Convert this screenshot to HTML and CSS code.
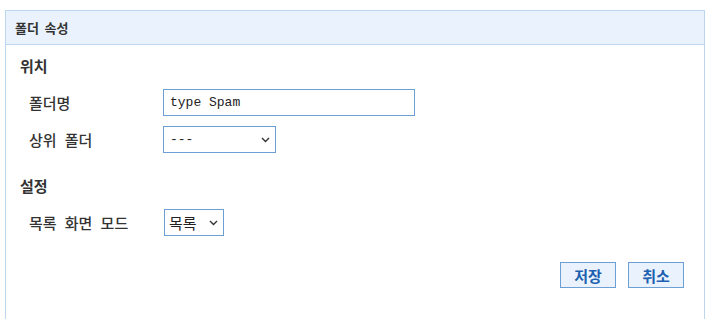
FILE: index.html
```html
<!DOCTYPE html>
<html lang="ko">
<head>
<meta charset="UTF-8">
<meta name="viewport" content="width=device-width, initial-scale=1.0">
<title>폴더 속성</title>
<link rel="stylesheet" href="styles.css">
</head>
<body>
<div class="panel">
  <div class="panel-head">폴더 속성</div>
  <div class="panel-body">
    <h3 class="section">위치</h3>
    <div class="row">
      <label class="label">폴더명</label>
      <input type="text" class="text" value="type Spam">
    </div>
    <div class="row">
      <label class="label">상위 폴더</label>
      <select class="slct slct-parent">
        <option>---</option>
      </select>
    </div>
    <h3 class="section section-gap">설정</h3>
    <div class="row">
      <label class="label">목록 화면 모드</label>
      <select class="slct slct-mode">
        <option>목록</option>
      </select>
    </div>
    <div class="buttons">
      <button class="btn">저장</button>
      <button class="btn">취소</button>
    </div>
  </div>
</div>
</body>
</html>
```
FILE: styles.css
```css
html, body {
  margin: 0;
  height: 100%;
  overflow: hidden;
}
body {
  font-family: "Noto Sans CJK KR", "Noto Sans", sans-serif;
  color: #333;
  background: #fff;
}
.panel {
  box-sizing: border-box;
  height: calc(100% - 10px);
  margin: 10px 6px 0 5px;
  border: 1px solid #bdd7f1;
  border-bottom: 0;
}
.panel-head {
  height: 33px;
  line-height: 33px;
  padding-left: 9px;
  background-color: #eaf3fd;
  border-bottom: 1px solid #bdd7f1;
  font-size: 13px;
  font-weight: 700;
  word-spacing: 2px;
}
.panel-body {
  padding: 11px 20px 0 14px;
}
.section {
  margin: 0 0 13px 0;
  height: 20px;
  line-height: 20px;
  font-size: 15px;
  font-weight: 700;
}
.section-gap {
  margin-top: 23px;
}
.row {
  display: flex;
  align-items: center;
  height: 27px;
  margin-bottom: 10px;
}
.label {
  width: 143px;
  padding-left: 9px;
  box-sizing: border-box;
  font-size: 15px;
  font-weight: 500;
  word-spacing: 4px;
}
.text {
  width: 252px;
  height: 27px;
  box-sizing: border-box;
  border: 1px solid #6c9fd3;
  padding: 0 6px;
  font-family: "Liberation Mono", monospace;
  font-size: 13px;
  color: #222;
  outline: none;
}
.slct {
  height: 27px;
  box-sizing: border-box;
  border: 1px solid #6c9fd3;
  border-radius: 0;
  background: #fff;
  color: #222;
  -webkit-appearance: none;
  appearance: none;
  background-image: url("data:image/svg+xml,%3Csvg xmlns='http://www.w3.org/2000/svg' width='9' height='6'%3E%3Cpath d='M1 1l3.5 3.5L8 1' fill='none' stroke='%23333' stroke-width='1.4'/%3E%3C/svg%3E");
  background-repeat: no-repeat;
  background-position: right 5px center;
}
.slct-parent {
  width: 113px;
  padding: 0 6px;
  font-family: "Liberation Mono", monospace;
  font-size: 13px;
}
.slct-mode {
  width: 60px;
  margin-left: 1px;
  padding: 0 4px;
  font-family: "Noto Sans CJK KR", sans-serif;
  font-size: 15px;
}
.buttons {
  display: flex;
  justify-content: flex-end;
  gap: 12px;
  margin-top: 26px;
}
.btn {
  width: 56px;
  height: 26px;
  padding: 0;
  border: 1px solid #6c9fd3;
  background-color: #eaf3fd;
  color: #1d5fb0;
  font-family: "Noto Sans CJK KR", sans-serif;
  font-size: 15px;
  font-weight: 700;
}
```
